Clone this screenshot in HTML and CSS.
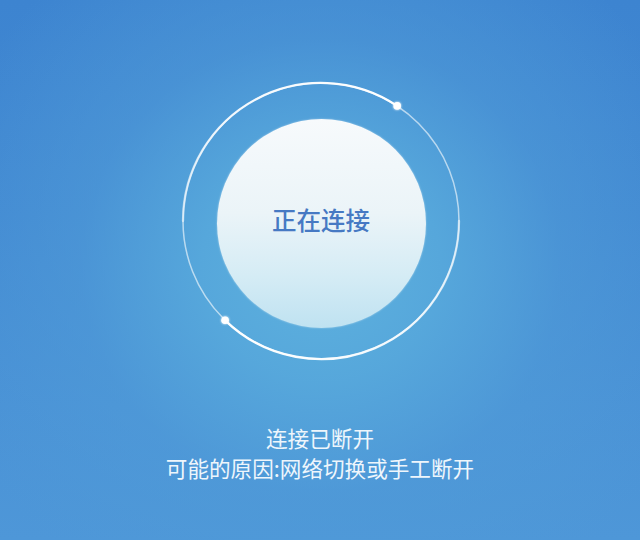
FILE: index.html
```html
<!DOCTYPE html>
<html lang="zh-CN">
<head>
<meta charset="utf-8">
<title>连接已断开</title>
<link rel="stylesheet" href="styles.css">
</head>
<body>
<main class="screen">
  <div class="dial">
    <div class="core">
      <span class="core-text">正在连接</span>
    </div>
    <svg class="ring" width="300" height="300" viewBox="0 0 300 300">
      <defs>
        <linearGradient id="fadeA" gradientUnits="userSpaceOnUse" x1="12" y1="150" x2="226" y2="35">
          <stop offset="0" stop-color="#ffffff" stop-opacity="0.5"/>
          <stop offset="0.35" stop-color="#ffffff" stop-opacity="0.85"/>
          <stop offset="1" stop-color="#ffffff" stop-opacity="1"/>
        </linearGradient>
        <linearGradient id="fadeB" gradientUnits="userSpaceOnUse" x1="288" y1="150" x2="54" y2="249">
          <stop offset="0" stop-color="#ffffff" stop-opacity="0.5"/>
          <stop offset="0.35" stop-color="#ffffff" stop-opacity="0.85"/>
          <stop offset="1" stop-color="#ffffff" stop-opacity="1"/>
        </linearGradient>
        <filter id="glow" x="-1" y="-1" width="3" height="3">
          <feGaussianBlur stdDeviation="1.2" result="b"/>
          <feMerge><feMergeNode in="b"/><feMergeNode in="SourceGraphic"/></feMerge>
        </filter>
      </defs>
      <circle cx="150" cy="150" r="138" fill="none" stroke="rgba(255,255,255,0.6)" stroke-width="1.5"/>
      <path d="M12 150 A138 138 0 0 1 226.2 34.9" fill="none" stroke="url(#fadeA)" stroke-width="2.3" stroke-linecap="round"/>
      <path d="M288 150 A138 138 0 0 1 54.1 249.3" fill="none" stroke="url(#fadeB)" stroke-width="2.3" stroke-linecap="round"/>
      <circle cx="226.2" cy="34.9" r="3.8" fill="#ffffff" filter="url(#glow)"/>
      <circle cx="54.1" cy="249.3" r="3.8" fill="#ffffff" filter="url(#glow)"/>
    </svg>
  </div>
  <div class="status">
    <p class="status-line">连接已断开</p>
    <p class="status-line">可能的原因:网络切换或手工断开</p>
  </div>
</main>
</body>
</html>
```
FILE: styles.css
```css
html, body {
  margin: 0;
  padding: 0;
}

body {
  width: 640px;
  height: 540px;
  overflow: hidden;
  font-family: "Noto Sans CJK SC", "Noto Sans", "Liberation Sans", sans-serif;
}

.screen {
  width: 640px;
  height: 540px;
  display: flex;
  flex-direction: column;
  align-items: center;
  background:
    radial-gradient(ellipse 400px 380px at 321px 265px,
      rgba(94, 178, 222, 1) 0%,
      rgba(88, 170, 220, 0.9) 30%,
      rgba(80, 156, 216, 0.55) 60%,
      rgba(80, 156, 216, 0) 100%),
    linear-gradient(180deg, #3d84d0 0%, #4289d2 40%, #4a92d6 75%, #4e97d8 100%);
}

.dial {
  position: relative;
  width: 300px;
  height: 300px;
  margin-top: 71px;
  margin-left: 2px;
  display: flex;
  align-items: center;
  justify-content: center;
}

.ring {
  position: absolute;
  left: 0;
  top: 0;
}

.core {
  width: 209px;
  height: 209px;
  margin-top: 4px;
  border-radius: 50%;
  background: linear-gradient(180deg, #f7fafc 0%, #ebf4f8 45%, #d5ecf5 75%, #bfe2f1 100%);
  box-shadow: 0 0 2px rgba(255, 255, 255, 0.5);
  display: flex;
  align-items: center;
  justify-content: center;
}

.core-text {
  font-size: 24.5px;
  line-height: 30px;
  font-weight: 500;
  color: #4679c3;
  margin-top: -6px;
}

.status {
  margin-top: 52px;
  display: flex;
  flex-direction: column;
  align-items: center;
}

.status-line {
  margin: 0;
  font-size: 21.6px;
  line-height: 30px;
  color: #eef6fc;
  white-space: nowrap;
}
```
